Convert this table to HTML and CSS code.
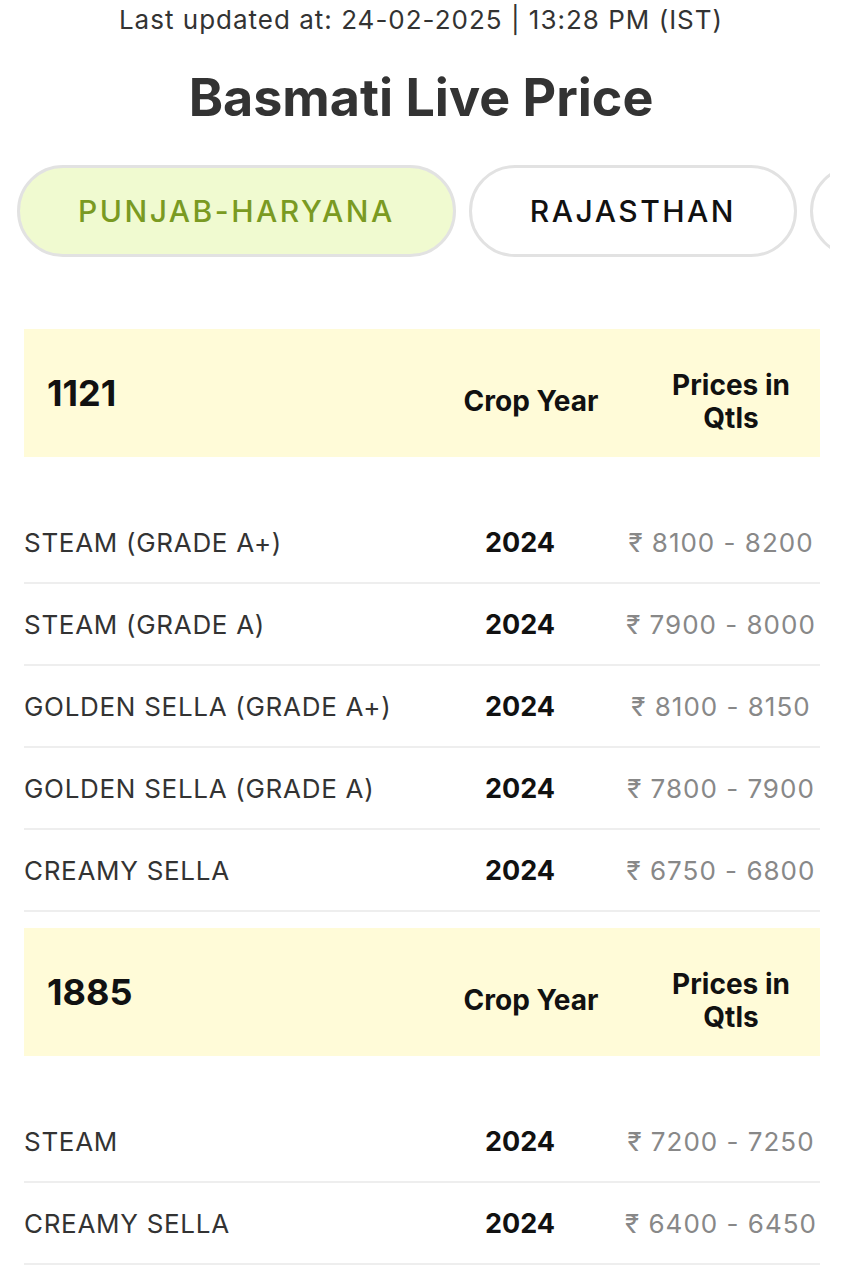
FILE: index.html
```html
<!DOCTYPE html>
<html lang="en">
<head>
<meta charset="utf-8">
<title>Basmati Live Price</title>
<link rel="stylesheet" href="styles.css">
</head>
<body>
<div class="page">
  <p class="updated">Last updated at: 24-02-2025 | 13:28 PM (IST)</p>
  <h1 class="title">Basmati Live Price</h1>
  <div class="tabs">
    <div class="tab active">PUNJAB-HARYANA</div>
    <div class="tab">RAJASTHAN</div>
    <div class="tab"></div>
  </div>

  <section class="variety">
    <div class="head">
      <div class="h-name">1121</div>
      <div class="h-year">Crop Year</div>
      <div class="h-price">Prices in<br>Qtls</div>
    </div>
    <div class="rows">
      <div class="row"><div class="c-name">STEAM (GRADE A+)</div><div class="c-year">2024</div><div class="c-price">₹ 8100 - 8200</div></div>
      <div class="row"><div class="c-name">STEAM (GRADE A)</div><div class="c-year">2024</div><div class="c-price">₹ 7900 - 8000</div></div>
      <div class="row"><div class="c-name">GOLDEN SELLA (GRADE A+)</div><div class="c-year">2024</div><div class="c-price">₹ 8100 - 8150</div></div>
      <div class="row"><div class="c-name">GOLDEN SELLA (GRADE A)</div><div class="c-year">2024</div><div class="c-price">₹ 7800 - 7900</div></div>
      <div class="row"><div class="c-name">CREAMY SELLA</div><div class="c-year">2024</div><div class="c-price">₹ 6750 - 6800</div></div>
    </div>
  </section>

  <section class="variety">
    <div class="head">
      <div class="h-name">1885</div>
      <div class="h-year">Crop Year</div>
      <div class="h-price">Prices in<br>Qtls</div>
    </div>
    <div class="rows">
      <div class="row"><div class="c-name">STEAM</div><div class="c-year">2024</div><div class="c-price">₹ 7200 - 7250</div></div>
      <div class="row"><div class="c-name">CREAMY SELLA</div><div class="c-year">2024</div><div class="c-price">₹ 6400 - 6450</div></div>
    </div>
  </section>
</div>
</body>
</html>
```
FILE: styles.css
```css
* { box-sizing: border-box; }
html, body { margin: 0; padding: 0; background: #fff; }
body {
  font-family: "Inter", "Open Sans", "DejaVu Sans", sans-serif;
  color: #333;
}
.page { width: 842px; overflow: hidden; }

.updated {
  margin: 0;
  height: 40px;
  line-height: 40px;
  text-align: center;
  font-size: 26px;
  letter-spacing: 1px;
  color: #333;
}
.title {
  margin: 28px 0 0;
  height: 60px;
  line-height: 60px;
  text-align: center;
  font-size: 52px;
  font-weight: 700;
  color: #333;
}

.tabs {
  display: flex;
  gap: 13px;
  width: 830px;
  padding: 0 0 0 17px;
  margin-top: 37px;
  overflow: hidden;
}
.tab {
  flex: none;
  height: 92px;
  padding: 0 58px;
  border: 3px solid #e2e2e2;
  border-radius: 46px;
  background: #fff;
  display: flex;
  align-items: center;
  font-size: 30px;
  font-weight: 500;
  letter-spacing: 2.5px;
  color: #111;
}
.tab:empty { width: 120px; }
.tab.active {
  background: #f0fad0;
  color: #7a9a22;
}

.variety { margin: 0 22px 0 24px; }
.variety:first-of-type { margin-top: 72px; }
.variety + .variety { margin-top: 16px; }

.head {
  display: grid;
  grid-template-columns: 416px 182px 198px;
  align-items: center;
  height: 128px;
  background: #fffbd8;
  font-weight: 700;
  color: #111;
}
.h-name { padding-left: 23px; font-size: 36px; }
.h-year { text-align: center; font-size: 28px; margin-top: 16px; }
.h-price { text-align: center; font-size: 28px; line-height: 33px; padding-left: 20px; margin-top: 18px; }

.rows { padding-top: 45px; }
.row {
  display: grid;
  grid-template-columns: 416px 182px 198px;
  align-items: center;
  height: 82px;
  border-bottom: 2px solid #eeeeee;
  font-size: 26px;
}
.c-name { color: #333; letter-spacing: 0.7px; }
.c-year { text-align: center; font-weight: 700; color: #111; padding-right: 22px; font-size: 27px; }
.c-price { text-align: center; color: #888; letter-spacing: 1px; }
```
